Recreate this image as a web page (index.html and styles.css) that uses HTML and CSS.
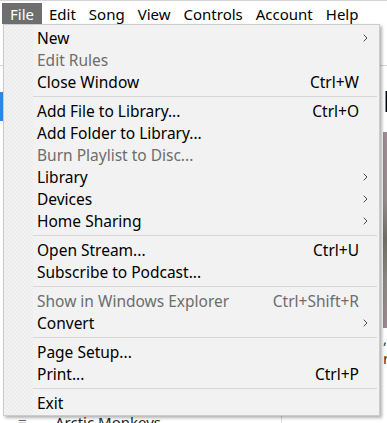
FILE: index.html
```html
<!DOCTYPE html>
<html>
<head>
<meta charset="utf-8">
<link rel="stylesheet" href="styles.css">
</head>
<body>
<div class="menubar">
  <span class="mb-item active">File</span>
  <span class="mb-item">Edit</span>
  <span class="mb-item">Song</span>
  <span class="mb-item">View</span>
  <span class="mb-item">Controls</span>
  <span class="mb-item">Account</span>
  <span class="mb-item">Help</span>
</div>
<div class="app">
  <div class="toolbar"></div>
  <div class="content">
    <aside class="sidebar">
      <div class="side-top"></div>
      <div class="side-sel"></div>
      <div class="side-fill"></div>
      <div class="side-row"><span class="side-icon">≡</span><span class="side-name">Arctic Monkeys</span></div>
    </aside>
    <main class="main">
      <h1 class="title">Music</h1>
      <div class="cover"></div>
      <div class="frag">, more</div>
      <div class="frag">r</div>
    </main>
  </div>
</div>

<div class="menu">
  <div class="item"><span class="label">New</span><span class="sc"></span><span class="arrow"><svg width="5" height="8" viewBox="0 0 5 8"><polyline points="0.7,0.7 4,4 0.7,7.3" fill="none" stroke="#4a4a4a" stroke-width="1"/></svg></span></div>
  <div class="item disabled"><span class="label">Edit Rules</span><span class="sc"></span><span class="arrow"></span></div>
  <div class="item"><span class="label">Close Window</span><span class="sc">Ctrl+W</span><span class="arrow"></span></div>
  <div class="sep"></div>
  <div class="item"><span class="label">Add File to Library...</span><span class="sc">Ctrl+O</span><span class="arrow"></span></div>
  <div class="item"><span class="label">Add Folder to Library...</span><span class="sc"></span><span class="arrow"></span></div>
  <div class="item disabled"><span class="label">Burn Playlist to Disc...</span><span class="sc"></span><span class="arrow"></span></div>
  <div class="item"><span class="label">Library</span><span class="sc"></span><span class="arrow"><svg width="5" height="8" viewBox="0 0 5 8"><polyline points="0.7,0.7 4,4 0.7,7.3" fill="none" stroke="#4a4a4a" stroke-width="1"/></svg></span></div>
  <div class="item"><span class="label">Devices</span><span class="sc"></span><span class="arrow"><svg width="5" height="8" viewBox="0 0 5 8"><polyline points="0.7,0.7 4,4 0.7,7.3" fill="none" stroke="#4a4a4a" stroke-width="1"/></svg></span></div>
  <div class="item"><span class="label">Home Sharing</span><span class="sc"></span><span class="arrow"><svg width="5" height="8" viewBox="0 0 5 8"><polyline points="0.7,0.7 4,4 0.7,7.3" fill="none" stroke="#4a4a4a" stroke-width="1"/></svg></span></div>
  <div class="sep"></div>
  <div class="item"><span class="label">Open Stream...</span><span class="sc">Ctrl+U</span><span class="arrow"></span></div>
  <div class="item"><span class="label">Subscribe to Podcast...</span><span class="sc"></span><span class="arrow"></span></div>
  <div class="sep"></div>
  <div class="item disabled"><span class="label">Show in Windows Explorer</span><span class="sc">Ctrl+Shift+R</span><span class="arrow"></span></div>
  <div class="item"><span class="label">Convert</span><span class="sc"></span><span class="arrow"><svg width="5" height="8" viewBox="0 0 5 8"><polyline points="0.7,0.7 4,4 0.7,7.3" fill="none" stroke="#4a4a4a" stroke-width="1"/></svg></span></div>
  <div class="sep"></div>
  <div class="item"><span class="label">Page Setup...</span><span class="sc"></span><span class="arrow"></span></div>
  <div class="item"><span class="label">Print...</span><span class="sc">Ctrl+P</span><span class="arrow"></span></div>
  <div class="sep"></div>
  <div class="item"><span class="label">Exit</span><span class="sc"></span><span class="arrow"></span></div>
</div>
</body>
</html>
```
FILE: styles.css
```css
* { box-sizing: border-box; }
html, body { margin: 0; padding: 0; }
body {
  width: 387px;
  height: 423px;
  overflow: hidden;
  background: #fff;
  font-family: "Noto Sans", "Open Sans", sans-serif;
  color: #000;
  position: relative;
}
.menubar {
  height: 24px;
  border-top: 1px solid #d4d4d4;
  display: flex;
  align-items: stretch;
  padding-left: 2px;
  font-size: 15px;
  line-height: 22px;
}
.mb-item {
  padding: 0 6px;
  margin-top: 2px;
}
.mb-item.active {
  padding: 0 8px;
  background: #6e6e6e;
  color: #fff;
}
.mb-item + .mb-item { margin-left: 1px; }

.app { height: 399px; display: flex; flex-direction: column; }
.toolbar { height: 42px; border-bottom: 1px solid #d6d6d6; flex: none; }
.content { flex: 1; display: flex; }
.sidebar {
  width: 282px;
  border-right: 1px solid #dcdcdc;
  display: flex;
  flex-direction: column;
}
.side-top { height: 26px; }
.side-sel { height: 29px; background: #2f86e8; width: 100%; }
.side-fill { flex: 1; }
.side-row {
  height: 8px;
  display: flex;
  align-items: flex-start;
  font-size: 15px;
  line-height: 15px;
  color: #222;
  overflow: hidden;
}
.side-icon { margin-left: 18px; width: 37px; color: #666; }
.main { flex: 1; padding-left: 101px; padding-top: 20px; overflow: hidden; }
.title { margin: 0; font-size: 28px; line-height: 30px; font-weight: 700; white-space: nowrap; }
.cover {
  margin-top: 16px;
  width: 200px;
  height: 196px;
  background: linear-gradient(180deg, #9e8a93 0%, #968a8c 35%, #6f6e62 55%, #8a8780 75%, #9c8790 100%);
}
.frag { font-size: 15px; line-height: 20px; color: #333; white-space: nowrap; }

.menu {
  position: absolute;
  left: 3px;
  top: 24px;
  width: 377px;
  padding: 2px 0 1px;
  background: #f2f2f2;
  border: 1px solid #cccccc;
  box-shadow: 2px 2px 3px rgba(0,0,0,0.3);
  font-size: 15.5px;
}
.menu::before {
  content: "";
  position: absolute;
  left: 0;
  top: 0;
  bottom: 0;
  width: 29px;
  background-image: repeating-conic-gradient(#eaeaea 0 25%, #f2f2f2 0 50%);
  background-size: 4px 4px;
  opacity: 0.6;
}
.item {
  display: grid;
  grid-template-columns: 1fr auto 20px;
  height: 22px;
  line-height: 22px;
  padding-left: 33px;
  position: relative;
  white-space: nowrap;
}
.item.disabled { color: #6d6d6d; }
.sc { text-align: right; }
.arrow { display: flex; align-items: center; padding-left: 4px; }
.arrow svg { display: block; margin-top: -1px; }
.sep {
  height: 7px;
  margin: 0 2px 0 29px;
  position: relative;
}
.sep::after {
  content: "";
  position: absolute;
  left: 0; right: 0; top: 3px;
  height: 1px;
  background: #d7d7d7;
}
```
